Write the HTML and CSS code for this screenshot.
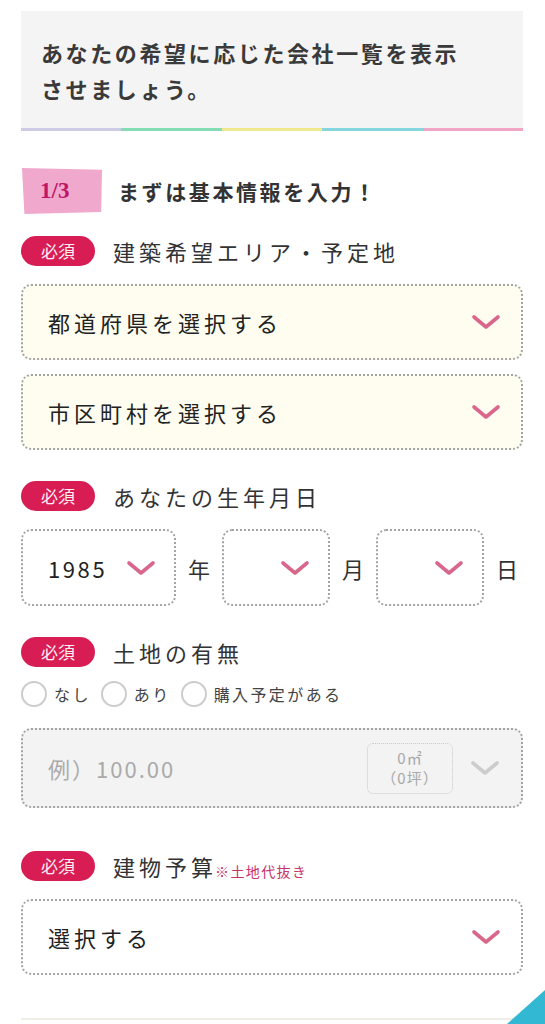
FILE: index.html
```html
<!DOCTYPE html>
<html lang="ja">
<head>
    <meta charset="UTF-8">
    <meta name="viewport" content="width=device-width, initial-scale=1.0">
    <title>会社一覧を表示</title>
    <link rel="stylesheet" href="styles.css">
</head>
<body>
    <div class="wrap">
        <div class="lead">
            <p class="lead-text">あなたの希望に応じた会社一覧を表示させましょう。</p>
        </div>
        <div class="rainbow">
            <span class="c1"></span><span class="c2"></span><span class="c3"></span><span class="c4"></span><span class="c5"></span>
        </div>

        <div class="step">
            <span class="step-no">1/3</span>
            <span class="step-title">まずは基本情報を入力！</span>
        </div>

        <!-- エリア -->
        <div class="field">
            <div class="field-head"><span class="req">必須</span><span class="field-label">建築希望エリア・予定地</span></div>
            <div class="select yellow">
                <span class="select-text">都道府県を選択する</span>
                <svg class="chev" viewBox="0 0 30 16"><polyline points="3,3 15,13 27,3"/></svg>
            </div>
            <div class="select yellow">
                <span class="select-text">市区町村を選択する</span>
                <svg class="chev" viewBox="0 0 30 16"><polyline points="3,3 15,13 27,3"/></svg>
            </div>
        </div>

        <!-- 生年月日 -->
        <div class="field">
            <div class="field-head"><span class="req">必須</span><span class="field-label">あなたの生年月日</span></div>
            <div class="date-row">
                <div class="date-box year">
                    <span class="date-val">1985</span>
                    <svg class="chev" viewBox="0 0 30 16"><polyline points="3,3 15,13 27,3"/></svg>
                </div>
                <span class="date-unit">年</span>
                <div class="date-box">
                    <svg class="chev" viewBox="0 0 30 16"><polyline points="3,3 15,13 27,3"/></svg>
                </div>
                <span class="date-unit">月</span>
                <div class="date-box">
                    <svg class="chev" viewBox="0 0 30 16"><polyline points="3,3 15,13 27,3"/></svg>
                </div>
                <span class="date-unit">日</span>
            </div>
        </div>

        <!-- 土地 -->
        <div class="field">
            <div class="field-head"><span class="req">必須</span><span class="field-label">土地の有無</span></div>
            <div class="radios">
                <label class="radio"><span class="circle"></span>なし</label>
                <label class="radio"><span class="circle"></span>あり</label>
                <label class="radio"><span class="circle"></span>購入予定がある</label>
            </div>
            <div class="land">
                <span class="land-text">例）100.00</span>
                <div class="unit"><span>0㎡</span><span>（0坪）</span></div>
                <svg class="chev grey" viewBox="0 0 30 16"><polyline points="3,3 15,13 27,3"/></svg>
            </div>
        </div>

        <!-- 建物予算 -->
        <div class="field budget">
            <div class="field-head"><span class="req">必須</span><span class="field-label">建物予算</span><span class="note">※土地代抜き</span></div>
            <div class="select">
                <span class="select-text">選択する</span>
                <svg class="chev" viewBox="0 0 30 16"><polyline points="3,3 15,13 27,3"/></svg>
            </div>
        </div>

        <div class="bottom-line"></div>
    </div>
    <div class="corner"></div>
</body>
</html>
```

FILE: styles.css
```css
body {
    margin: 0;
    background-color: #ffffff;
    font-family: 'Noto Sans CJK JP', 'Noto Sans', sans-serif;
    color: #333333;
}
.wrap {
    padding: 11px 22px 0 21px;
    display: flex;
    flex-direction: column;
}

/* 見出し */
.lead {
    background-color: #f4f4f4;
    height: 117px;
    padding: 0 40px 0 20px;
    display: flex;
    align-items: center;
}
.lead-text {
    margin: 0;
    font-size: 22px;
    font-weight: 700;
    line-height: 36px;
    letter-spacing: 2.6px;
    color: #3a3a3a;
}
.rainbow {
    display: flex;
    height: 3px;
}
.rainbow span {
    flex: 1;
}
.c1 { background-color: #cdcbe3; }
.c2 { background-color: #84dcb4; }
.c3 { background-color: #efe88e; }
.c4 { background-color: #85d6df; }
.c5 { background-color: #f1a6c5; }

/* ステップ */
.step {
    display: flex;
    align-items: center;
    margin-top: 36px;
    height: 47px;
}
.step-no {
    width: 80px;
    height: 47px;
    margin-left: 1px;
    background-color: #f0a8cc;
    clip-path: polygon(0 2%, 100% 6%, 99% 96%, 3% 100%);
    color: #bf1668;
    font-family: 'Liberation Serif', serif;
    font-weight: 700;
    font-size: 23px;
    display: flex;
    align-items: center;
    padding-left: 18px;
    box-sizing: border-box;
}
.step-title {
    margin-left: 16px;
    font-size: 21px;
    font-weight: 700;
    letter-spacing: 2.6px;
    color: #333333;
}

/* 項目 */
.field {
    display: flex;
    flex-direction: column;
    margin-top: 22px;
}
.field + .field {
    margin-top: 31px;
}
.field.budget {
    margin-top: 43px;
}
.field-head {
    display: flex;
    align-items: center;
    height: 30px;
    margin-bottom: 18px;
}
.req {
    width: 74px;
    height: 30px;
    border-radius: 15px;
    background-color: #d81d55;
    color: #ffeef3;
    font-size: 17px;
    line-height: 30px;
    text-align: center;
}
.field-label {
    margin-left: 18px;
    font-size: 22px;
    letter-spacing: 4px;
    color: #333333;
}
.note {
    align-self: flex-end;
    margin-left: -2px;
    margin-bottom: 0;
    font-size: 14px;
    letter-spacing: 1.4px;
    color: #c8336a;
}

/* セレクト */
.select {
    height: 76px;
    box-sizing: border-box;
    border: 2px dotted #a3a3a3;
    border-radius: 10px;
    background-color: #ffffff;
    display: flex;
    align-items: center;
    justify-content: space-between;
    padding: 0 20px 0 25px;
}
.select + .select {
    margin-top: 14px;
}
.select.yellow {
    background-color: #fefdf0;
}
.select-text {
    font-size: 22px;
    letter-spacing: 4px;
    color: #222222;
}
.chev {
    width: 30px;
    height: 16px;
    flex-shrink: 0;
}
.chev polyline {
    fill: none;
    stroke: #d9678c;
    stroke-width: 3.6;
    stroke-linecap: round;
    stroke-linejoin: round;
}
.chev.grey polyline {
    stroke: #cccccc;
}

/* 生年月日 */
.date-row {
    display: flex;
    align-items: center;
    gap: 12px;
}
.date-box {
    width: 108px;
    height: 77px;
    box-sizing: border-box;
    border: 2px dotted #a3a3a3;
    border-radius: 10px;
    display: flex;
    align-items: center;
    justify-content: flex-end;
    padding-right: 18px;
}
.date-box.year {
    width: 155px;
    justify-content: space-between;
    padding-left: 25px;
}
.date-val {
    font-size: 22px;
    letter-spacing: 2.6px;
    color: #222222;
}
.date-unit {
    font-size: 22px;
    color: #333333;
}

/* 土地 */
.radios {
    display: flex;
    gap: 10px;
    margin-top: -4px;
    margin-bottom: 21px;
}
.radio {
    display: flex;
    align-items: center;
    font-size: 16px;
    letter-spacing: 2.4px;
    color: #444444;
}
.circle {
    width: 22px;
    height: 22px;
    border: 2px solid #cccccc;
    border-radius: 50%;
    margin-right: 7px;
    background-color: #ffffff;
}
.land {
    height: 80px;
    box-sizing: border-box;
    border: 2px dotted #a3a3a3;
    border-radius: 10px;
    background-color: #f3f3f3;
    display: flex;
    align-items: center;
    padding: 0 21px 0 25px;
}
.land-text {
    flex: 1;
    font-size: 22px;
    letter-spacing: 2px;
    color: #aaaaaa;
}
.unit {
    width: 86px;
    height: 51px;
    box-sizing: border-box;
    border: 1px dotted #c8c8c8;
    border-radius: 6px;
    display: flex;
    flex-direction: column;
    align-items: center;
    justify-content: center;
    font-size: 15px;
    line-height: 20px;
    letter-spacing: 1px;
    color: #a8a8a8;
    margin-right: 17px;
}

.bottom-line {
    margin-top: 43px;
    height: 2px;
    background-color: #f0ede6;
}
.corner {
    position: fixed;
    right: 0;
    bottom: 0;
    width: 38px;
    height: 34px;
    background-color: #33b8d3;
    clip-path: polygon(100% 0, 100% 100%, 0 100%);
}
```
